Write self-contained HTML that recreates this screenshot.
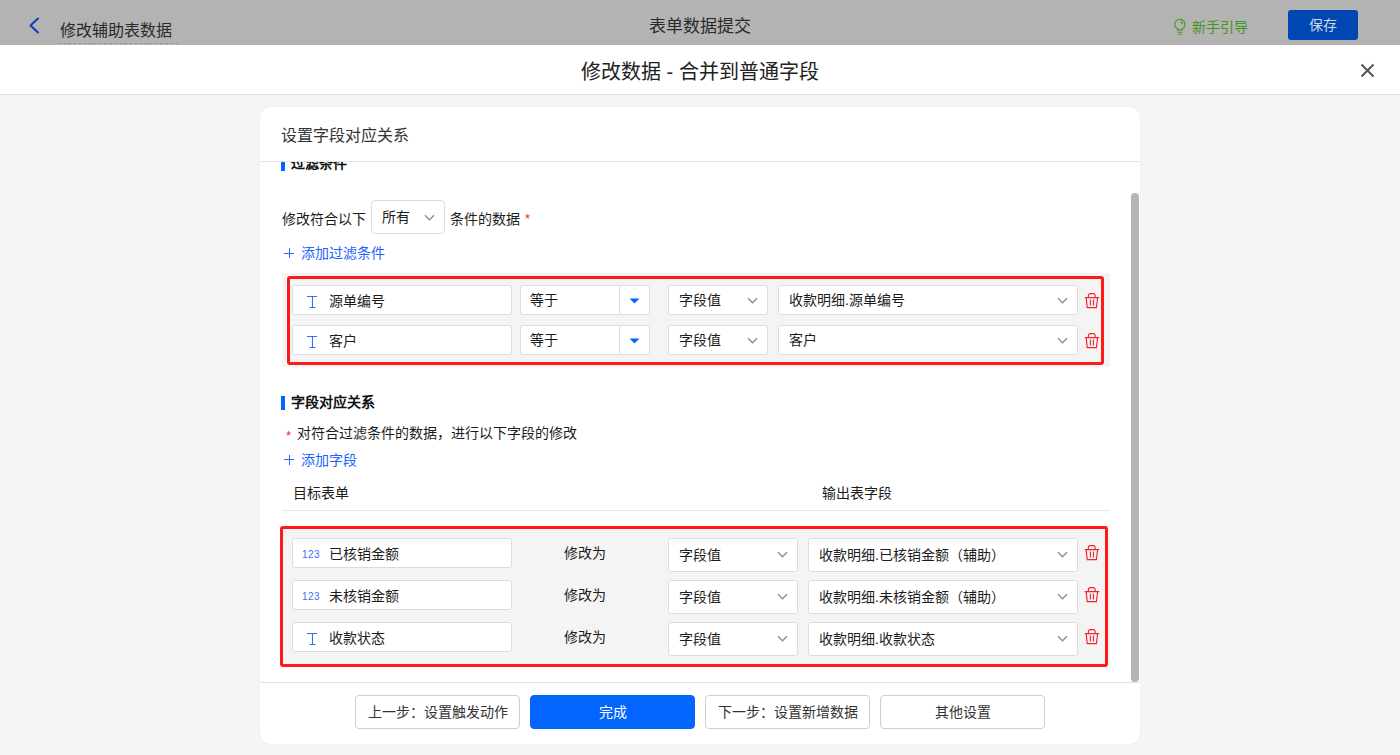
<!DOCTYPE html>
<html lang="zh-CN">
<head>
<meta charset="utf-8">
<style>
*{box-sizing:border-box;margin:0;padding:0}
html,body{width:1400px;height:755px;overflow:hidden}
body{position:relative;background:#f5f5f5;font-family:"Liberation Sans",sans-serif;color:#1c1c1c;font-size:14px}
.a{position:absolute;white-space:nowrap}
.t{line-height:20px}
.box{position:absolute;background:#fff;border:1px solid #dcdcdc;border-radius:2.5px}
.btn{position:absolute;border:1px solid #cfcfcf;border-radius:4px;background:#fff;text-align:center;line-height:33px;font-size:14px;color:#333}
</style>
</head>
<body>
<div class="a" style="left:0;top:0;width:1400px;height:45px;background:#b3b3b3"></div>
<svg class="a" style="left:28px;top:17px" width="12" height="17" viewBox="0 0 12 17"><path d="M10 1.5 L2.5 8.5 L10 15.5" fill="none" stroke="#0a3cc0" stroke-width="2" stroke-linecap="round" stroke-linejoin="round"/></svg>
<div class="a t" style="left:60px;top:21px;font-size:16px;color:#2a2a2a">修改辅助表数据</div>
<div class="a" style="left:58px;top:43px;width:120px;border-top:1px dashed #999"></div>
<div class="a t" style="left:649px;top:17px;font-size:17px;color:#2a2a2a">表单数据提交</div>
<svg class="a" style="left:1172px;top:17px" width="16" height="19" viewBox="0 0 16 19"><path d="M5.6 12.9V11.9A5.1 5.1 0 1 1 10.2 11.9V12.9Z" fill="none" stroke="#3f9820" stroke-width="1.1"/><path d="M5.4 15.3h5M6.2 17.3h3.4" stroke="#3f9820" stroke-width="1.1"/><path d="M8.3 4.6A3 3 0 0 1 10.6 7.3" fill="none" stroke="#3f9820" stroke-width="1.1"/></svg>
<div class="a t" style="left:1192px;top:17px;font-size:14px;color:#3f9820">新手引导</div>
<div class="a" style="left:1288px;top:10px;width:70px;height:30px;background:#0047b3;border-radius:3px;color:#cfd8e8;text-align:center;line-height:30px;font-size:14px">保存</div>
<div class="a" style="left:0;top:45px;width:1400px;height:50px;background:#fff;border-bottom:1px solid #dedede"></div>
<div class="a" style="left:581px;top:60px;font-size:20px;line-height:24px;color:#222">修改数据 - 合并到普通字段</div>
<svg class="a" style="left:1360px;top:63px" width="15" height="15" viewBox="0 0 15 15"><path d="M1.5 1.5L13.5 13.5M13.5 1.5L1.5 13.5" stroke="#555" stroke-width="2"/></svg>
<div class="a" style="left:260px;top:107px;width:880px;height:637px;background:#fff;border-radius:10px;box-shadow:0 0 1px rgba(0,0,0,.12)"></div>
<div class="a" style="left:260px;top:161px;width:880px;height:1px;background:#e2e2e2"></div>
<div class="a t" style="left:281px;top:126px;font-size:16px;color:#333">设置字段对应关系</div>
<div class="a" style="left:260px;top:682px;width:880px;height:1px;background:#e2e2e2"></div>
<div class="a" style="left:1131px;top:193px;width:8px;height:489px;background:#b4b4b4;border-radius:4px"></div>
<div class="a" style="left:270px;top:162px;width:200px;height:12px;overflow:hidden"><div class="a" style="left:11px;top:-4px;width:4px;height:13px;background:#0265ff"></div><div class="a t" style="left:21px;top:-9px;font-weight:bold;color:#111">过滤条件</div></div>
<div class="a t" style="left:282px;top:209px">修改符合以下</div>
<div class="box" style="left:371px;top:200px;width:74px;height:34px;border-radius:4px"></div>
<div class="a t" style="left:382px;top:207px">所有</div>
<svg class="a" style="left:424px;top:214px" width="11" height="7" viewBox="0 0 11 7"><path d="M1 1.3 L5.5 5.8 L10 1.3" fill="none" stroke="#838a99" stroke-width="1.25"/></svg>
<div class="a t" style="left:450px;top:209px">条件的数据</div>
<div class="a" style="left:525px;top:212px;color:#f5222d;font-size:13px;line-height:14px">*</div>
<svg class="a" style="left:284px;top:248px" width="10" height="10" viewBox="0 0 10 10"><path d="M0 5.5h10M5.5 0v10" stroke="#2d66ff" stroke-width="1"/></svg>
<div class="a t" style="left:301px;top:243px;color:#2262ff">添加过滤条件</div>
<div class="a" style="left:282px;top:273px;width:828px;height:94px;background:#f4f4f4"></div>
<div class="box" style="left:292px;top:285px;width:220px;height:30px"></div>
<svg class="a" style="left:306px;top:296px" width="12" height="13" viewBox="0 0 12 13"><path d="M1 0.5h10M6.5 0.5v11M3.5 11.5h6" fill="none" stroke="#3d6cff" stroke-width="1.1"/></svg>
<div class="a t" style="left:329px;top:291px">源单编号</div>
<div class="box" style="left:520px;top:285px;width:130px;height:30px"></div>
<div class="a" style="left:619px;top:286px;width:1px;height:28px;background:#dcdcdc"></div>
<div class="a t" style="left:530px;top:290px">等于</div>
<svg class="a" style="left:629px;top:298px" width="11" height="6" viewBox="0 0 11 6"><path d="M0.5 0.5h10L5.5 5.5z" fill="#0265ff"/></svg>
<div class="box" style="left:668px;top:285px;width:100px;height:30px"></div>
<div class="a t" style="left:679px;top:290px">字段值</div>
<svg class="a" style="left:747px;top:297px" width="11" height="7" viewBox="0 0 11 7"><path d="M1 1.3 L5.5 5.8 L10 1.3" fill="none" stroke="#838a99" stroke-width="1.25"/></svg>
<div class="box" style="left:778px;top:285px;width:300px;height:30px"></div>
<div class="a t" style="left:789px;top:290px">收款明细.源单编号</div>
<svg class="a" style="left:1057px;top:297px" width="11" height="7" viewBox="0 0 11 7"><path d="M1 1.3 L5.5 5.8 L10 1.3" fill="none" stroke="#838a99" stroke-width="1.25"/></svg>
<svg class="a" style="left:1084px;top:293px" width="16" height="16" viewBox="0 0 16 16"><path d="M0.8 4.6h14.4M4.4 4.4V2.3a1.7 1.7 0 0 1 1.7-1.7h3.3a1.7 1.7 0 0 1 1.7 1.7V4.4M2.2 4.8L3.2 14.6h9.2l1.2-9.8M6.4 6.6v6M9.4 6.6v6" fill="none" stroke="#f5222d" stroke-width="1.15"/></svg>
<div class="box" style="left:292px;top:325px;width:220px;height:30px"></div>
<svg class="a" style="left:306px;top:336px" width="12" height="13" viewBox="0 0 12 13"><path d="M1 0.5h10M6.5 0.5v11M3.5 11.5h6" fill="none" stroke="#3d6cff" stroke-width="1.1"/></svg>
<div class="a t" style="left:329px;top:331px">客户</div>
<div class="box" style="left:520px;top:325px;width:130px;height:30px"></div>
<div class="a" style="left:619px;top:326px;width:1px;height:28px;background:#dcdcdc"></div>
<div class="a t" style="left:530px;top:330px">等于</div>
<svg class="a" style="left:629px;top:338px" width="11" height="6" viewBox="0 0 11 6"><path d="M0.5 0.5h10L5.5 5.5z" fill="#0265ff"/></svg>
<div class="box" style="left:668px;top:325px;width:100px;height:30px"></div>
<div class="a t" style="left:679px;top:330px">字段值</div>
<svg class="a" style="left:747px;top:337px" width="11" height="7" viewBox="0 0 11 7"><path d="M1 1.3 L5.5 5.8 L10 1.3" fill="none" stroke="#838a99" stroke-width="1.25"/></svg>
<div class="box" style="left:778px;top:325px;width:300px;height:30px"></div>
<div class="a t" style="left:789px;top:330px">客户</div>
<svg class="a" style="left:1057px;top:337px" width="11" height="7" viewBox="0 0 11 7"><path d="M1 1.3 L5.5 5.8 L10 1.3" fill="none" stroke="#838a99" stroke-width="1.25"/></svg>
<svg class="a" style="left:1084px;top:333px" width="16" height="16" viewBox="0 0 16 16"><path d="M0.8 4.6h14.4M4.4 4.4V2.3a1.7 1.7 0 0 1 1.7-1.7h3.3a1.7 1.7 0 0 1 1.7 1.7V4.4M2.2 4.8L3.2 14.6h9.2l1.2-9.8M6.4 6.6v6M9.4 6.6v6" fill="none" stroke="#f5222d" stroke-width="1.15"/></svg>
<div class="a" style="left:287px;top:276px;width:817px;height:89px;border:3px solid #ff1a1a;border-radius:3px"></div>
<div class="a" style="left:281px;top:396px;width:4px;height:14px;background:#0265ff"></div>
<div class="a t" style="left:291px;top:392px;font-weight:bold;color:#111">字段对应关系</div>
<div class="a" style="left:286px;top:429px;color:#f5222d;font-size:13px;line-height:14px">*</div>
<div class="a t" style="left:297px;top:423px">对符合过滤条件的数据，进行以下字段的修改</div>
<svg class="a" style="left:284px;top:455px" width="10" height="10" viewBox="0 0 10 10"><path d="M0 4.5h10M5.5 0v10" stroke="#2d66ff" stroke-width="1"/></svg>
<div class="a t" style="left:301px;top:450px;color:#2262ff">添加字段</div>
<div class="a t" style="left:293px;top:483px">目标表单</div>
<div class="a t" style="left:822px;top:483px">输出表字段</div>
<div class="a" style="left:282px;top:510px;width:828px;height:1px;background:#e6e6e6"></div>
<div class="a" style="left:282px;top:528px;width:828px;height:137px;background:#f4f4f4"></div>
<div class="box" style="left:292px;top:538px;width:220px;height:30px"></div>
<div class="a" style="left:302px;top:549px;font-size:10px;line-height:12px;color:#3b6cff;letter-spacing:0.5px">123</div>
<div class="a t" style="left:329px;top:544px">已核销金额</div>
<div class="a t" style="left:564px;top:543px">修改为</div>
<div class="box" style="left:668px;top:538px;width:130px;height:34px"></div>
<div class="a t" style="left:679px;top:545px">字段值</div>
<svg class="a" style="left:777px;top:551px" width="11" height="7" viewBox="0 0 11 7"><path d="M1 1.3 L5.5 5.8 L10 1.3" fill="none" stroke="#838a99" stroke-width="1.25"/></svg>
<div class="box" style="left:808px;top:538px;width:270px;height:34px"></div>
<div class="a t" style="left:819px;top:545px">收款明细.已核销金额（辅助）</div>
<svg class="a" style="left:1057px;top:551px" width="11" height="7" viewBox="0 0 11 7"><path d="M1 1.3 L5.5 5.8 L10 1.3" fill="none" stroke="#838a99" stroke-width="1.25"/></svg>
<svg class="a" style="left:1084px;top:545px" width="16" height="16" viewBox="0 0 16 16"><path d="M0.8 4.6h14.4M4.4 4.4V2.3a1.7 1.7 0 0 1 1.7-1.7h3.3a1.7 1.7 0 0 1 1.7 1.7V4.4M2.2 4.8L3.2 14.6h9.2l1.2-9.8M6.4 6.6v6M9.4 6.6v6" fill="none" stroke="#f5222d" stroke-width="1.15"/></svg>
<div class="box" style="left:292px;top:580px;width:220px;height:30px"></div>
<div class="a" style="left:302px;top:591px;font-size:10px;line-height:12px;color:#3b6cff;letter-spacing:0.5px">123</div>
<div class="a t" style="left:329px;top:586px">未核销金额</div>
<div class="a t" style="left:564px;top:585px">修改为</div>
<div class="box" style="left:668px;top:580px;width:130px;height:34px"></div>
<div class="a t" style="left:679px;top:587px">字段值</div>
<svg class="a" style="left:777px;top:593px" width="11" height="7" viewBox="0 0 11 7"><path d="M1 1.3 L5.5 5.8 L10 1.3" fill="none" stroke="#838a99" stroke-width="1.25"/></svg>
<div class="box" style="left:808px;top:580px;width:270px;height:34px"></div>
<div class="a t" style="left:819px;top:587px">收款明细.未核销金额（辅助）</div>
<svg class="a" style="left:1057px;top:593px" width="11" height="7" viewBox="0 0 11 7"><path d="M1 1.3 L5.5 5.8 L10 1.3" fill="none" stroke="#838a99" stroke-width="1.25"/></svg>
<svg class="a" style="left:1084px;top:587px" width="16" height="16" viewBox="0 0 16 16"><path d="M0.8 4.6h14.4M4.4 4.4V2.3a1.7 1.7 0 0 1 1.7-1.7h3.3a1.7 1.7 0 0 1 1.7 1.7V4.4M2.2 4.8L3.2 14.6h9.2l1.2-9.8M6.4 6.6v6M9.4 6.6v6" fill="none" stroke="#f5222d" stroke-width="1.15"/></svg>
<div class="box" style="left:292px;top:622px;width:220px;height:30px"></div>
<svg class="a" style="left:306px;top:633px" width="12" height="13" viewBox="0 0 12 13"><path d="M1 0.5h10M6.5 0.5v11M3.5 11.5h6" fill="none" stroke="#3d6cff" stroke-width="1.1"/></svg>
<div class="a t" style="left:329px;top:628px">收款状态</div>
<div class="a t" style="left:564px;top:627px">修改为</div>
<div class="box" style="left:668px;top:622px;width:130px;height:34px"></div>
<div class="a t" style="left:679px;top:629px">字段值</div>
<svg class="a" style="left:777px;top:635px" width="11" height="7" viewBox="0 0 11 7"><path d="M1 1.3 L5.5 5.8 L10 1.3" fill="none" stroke="#838a99" stroke-width="1.25"/></svg>
<div class="box" style="left:808px;top:622px;width:270px;height:34px"></div>
<div class="a t" style="left:819px;top:629px">收款明细.收款状态</div>
<svg class="a" style="left:1057px;top:635px" width="11" height="7" viewBox="0 0 11 7"><path d="M1 1.3 L5.5 5.8 L10 1.3" fill="none" stroke="#838a99" stroke-width="1.25"/></svg>
<svg class="a" style="left:1084px;top:629px" width="16" height="16" viewBox="0 0 16 16"><path d="M0.8 4.6h14.4M4.4 4.4V2.3a1.7 1.7 0 0 1 1.7-1.7h3.3a1.7 1.7 0 0 1 1.7 1.7V4.4M2.2 4.8L3.2 14.6h9.2l1.2-9.8M6.4 6.6v6M9.4 6.6v6" fill="none" stroke="#f5222d" stroke-width="1.15"/></svg>
<div class="a" style="left:280px;top:526px;width:828px;height:141px;border:3px solid #ff1a1a;border-radius:3px"></div>
<div class="btn" style="left:355px;top:695px;width:165px;height:34px">上一步：设置触发动作</div>
<div class="btn" style="left:530px;top:695px;width:165px;height:34px;background:#0265ff;border-color:#0265ff;color:#fff">完成</div>
<div class="btn" style="left:705px;top:695px;width:165px;height:34px">下一步：设置新增数据</div>
<div class="btn" style="left:880px;top:695px;width:165px;height:34px">其他设置</div>
</body>
</html>
